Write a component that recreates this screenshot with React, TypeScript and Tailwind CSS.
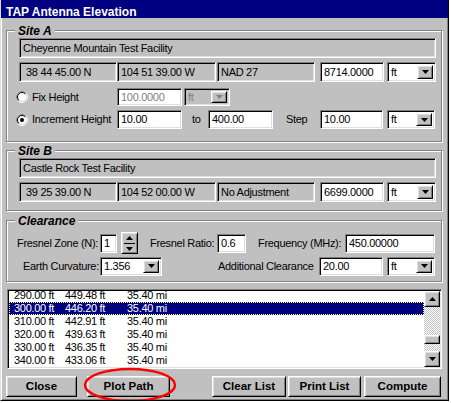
import React from 'react';

const sunken =
  'border border-t-[#808080] border-l-[#808080] border-r-white border-b-white shadow-[inset_1px_1px_0_#000,inset_-1px_-1px_0_#dfdfdf]';
const raised =
  'border border-t-white border-l-white border-r-black border-b-black shadow-[inset_1px_1px_0_#dfdfdf,inset_-1px_-1px_0_#808080]';
const etched = 'border border-[#808080] shadow-[inset_1px_1px_0_#fff,1px_1px_0_#fff]';

const Down = ({ color = '#000' }: { color?: string }) => (
  <svg width="7" height="4" viewBox="0 0 7 4">
    <polygon points="0,0 7,0 3.5,4" fill={color} />
  </svg>
);

const Up = ({ color = '#000' }: { color?: string }) => (
  <svg width="7" height="4" viewBox="0 0 7 4">
    <polygon points="0,4 7,4 3.5,0" fill={color} />
  </svg>
);

const Box = ({
  value,
  className,
  white = false,
  dim = false,
}: {
  value: string;
  className: string;
  white?: boolean;
  dim?: boolean;
}) => (
  <div
    className={`${sunken} ${white ? 'bg-white' : 'bg-[#c0c0c0]'} ${
      dim ? 'text-[#808080]' : 'text-black'
    } flex items-center pl-[3px] overflow-hidden whitespace-nowrap shrink-0 ${className}`}
  >
    {value}
  </div>
);

const Select = ({
  value,
  className,
  disabled = false,
}: {
  value: string;
  className: string;
  disabled?: boolean;
}) => (
  <div
    className={`${sunken} ${disabled ? 'bg-[#c0c0c0] text-[#808080]' : 'bg-white text-black'} flex items-stretch p-[2px] shrink-0 ${className}`}
  >
    <span className="flex-1 flex items-center pl-[1px] overflow-hidden">{value}</span>
    <div className={`${raised} bg-[#c0c0c0] w-[16px] flex items-center justify-center`}>
      <Down color={disabled ? '#808080' : '#000'} />
    </div>
  </div>
);

const Radio = ({ checked = false }: { checked?: boolean }) => (
  <svg width="12" height="12" viewBox="0 0 12 12" className="shrink-0">
    <circle cx="6" cy="6" r="5.5" fill="none" stroke="#fff" />
    <path d="M2.1 9.9 A5.5 5.5 0 0 1 9.9 2.1" fill="none" stroke="#808080" />
    <circle cx="6" cy="6" r="4.5" fill="#fff" stroke="#dfdfdf" />
    <path d="M2.8 9.2 A4.5 4.5 0 0 1 9.2 2.8" fill="none" stroke="#000" />
    {checked && <circle cx="6" cy="6" r="2" fill="#000" />}
  </svg>
);

const Group = ({
  title,
  className,
  children,
}: {
  title: string;
  className: string;
  children: React.ReactNode;
}) => (
  <div className={`${etched} ml-[5px] w-[436px] ${className}`}>
    <div className="-mt-[7px] ml-[8px] h-[14px] leading-[14px] w-fit px-[3px] bg-[#c0c0c0] font-bold italic text-[12px] tracking-normal">
      {title}
    </div>
    {children}
  </div>
);

const Btn = ({ label, className }: { label: string; className: string }) => (
  <div
    className={`${raised} bg-[#c0c0c0] h-[21px] flex items-center justify-center font-bold text-[11.5px] tracking-normal shrink-0 ${className}`}
  >
    {label}
  </div>
);

const rows = [
  ['290.00 ft', '449.48 ft', '35.40 mi'],
  ['300.00 ft', '446.20 ft', '35.40 mi'],
  ['310.00 ft', '442.91 ft', '35.40 mi'],
  ['320.00 ft', '439.63 ft', '35.40 mi'],
  ['330.00 ft', '436.35 ft', '35.40 mi'],
  ['340.00 ft', '433.06 ft', '35.40 mi'],
  ['350.00 ft', '429.78 ft', '35.40 mi'],
];

export default function App() {
  return (
    <div className="w-[451px] h-[403px] bg-white font-['Liberation_Sans',Arial,sans-serif] text-[11px] tracking-[-0.3px] text-black">
      <div className="relative w-[449px] h-[401px] bg-[#c0c0c0] border-l border-l-[#dfdfdf] border-r border-r-black border-b border-b-black shadow-[inset_1px_0_0_#fff,inset_-1px_-1px_0_#808080] flex flex-col overflow-hidden">
        {/* title bar */}
        <div className="h-[18px] bg-[#000080] text-white font-bold text-[12px] tracking-normal leading-[14px] pt-[5px] pl-[5px] shrink-0">
          TAP Antenna Elevation
        </div>

        {/* Site A */}
        <Group title="Site A" className="mt-[12px] pb-[12px]">
          <div className="pl-[12px] mt-0">
            <Box value="Cheyenne Mountain Test Facility" className="w-[417px] h-[20px]" />
            <div className="flex mt-[4px] h-[20px]">
              <Box value="38 44 45.00 N" className="w-[98px] h-[20px] pl-[6px]" />
              <Box value="104 51 39.00 W" className="w-[99px] h-[20px]" />
              <Box value="NAD 27" className="ml-[1px] w-[98px] h-[20px]" />
              <Box value="8714.0000" white className="ml-[5px] w-[64px] h-[20px] pl-[2px]" />
              <Select value="ft" className="ml-[3px] w-[49px] h-[20px]" />
            </div>
            <div className="flex items-center mt-[6px] h-[18px]">
              <div className="-ml-[3px]">
                <Radio />
              </div>
              <span className="ml-[4px] w-[85px]">Fix Height</span>
              <Box value="100.0000" white dim className="w-[65px] h-[18px]" />
              <Select value="ft" disabled className="ml-[2px] w-[46px] h-[18px]" />
            </div>
            <div className="flex items-center mt-[4px] h-[19px]">
              <div className="-ml-[3px]">
                <Radio checked />
              </div>
              <span className="ml-[4px] w-[85px]">Increment Height</span>
              <Box value="10.00" white className="w-[65px] h-[19px]" />
              <span className="ml-[10px] w-[16px]">to</span>
              <Box value="400.00" white className="w-[65px] h-[19px]" />
              <span className="ml-[13px] w-[34px]">Step</span>
              <Box value="10.00" white className="w-[63px] h-[19px]" />
              <Select value="ft" className="ml-[4px] w-[48px] h-[19px]" />
            </div>
          </div>
        </Group>

        {/* Site B */}
        <Group title="Site B" className="mt-[8px] pb-[8px]">
          <div className="pl-[12px]">
            <Box value="Castle Rock Test Facility" className="w-[417px] h-[20px]" />
            <div className="flex mt-[4px] h-[20px]">
              <Box value="39 25 39.00 N" className="w-[98px] h-[20px] pl-[6px]" />
              <Box value="104 52 00.00 W" className="w-[99px] h-[20px]" />
              <Box value="No Adjustment" className="ml-[1px] w-[98px] h-[20px]" />
              <Box value="6699.0000" white className="ml-[5px] w-[64px] h-[20px] pl-[2px]" />
              <Select value="ft" className="ml-[3px] w-[49px] h-[20px]" />
            </div>
          </div>
        </Group>

        {/* Clearance */}
        <Group title="Clearance" className="mt-[9px] pb-[5px]">
          <div className="pl-[10px]">
            <div className="flex items-center mt-[4px] h-[22px]">
              <span className="w-[83px]">Fresnel Zone (N):</span>
              <Box value="1" white className="w-[17px] h-[19px]" />
              <div className={`${raised} ml-[4px] w-[17px] h-[22px] bg-[#c0c0c0] flex flex-col items-center justify-center gap-[3px]`}>
                <Up />
                <div className="w-[11px] h-px bg-black" />
                <Down />
              </div>
              <span className="ml-[12px] w-[67px]">Fresnel Ratio:</span>
              <Box value="0.6" white className="w-[29px] h-[19px]" />
              <span className="ml-[12px] w-[87px]">Frequency (MHz):</span>
              <Box value="450.00000" white className="w-[90px] h-[19px]" />
            </div>
            <div className="flex items-center mt-[2px] h-[20px]">
              <span className="ml-[6px] w-[77px]">Earth Curvature:</span>
              <Select value="1.356" className="w-[62px] h-[19px]" />
              <span className="ml-[56px] w-[101px]">Additional Clearance</span>
              <Box value="20.00" white className="w-[64px] h-[19px]" />
              <Select value="ft" className="ml-[4px] w-[48px] h-[19px]" />
            </div>
          </div>
        </Group>

        {/* results list */}
        <div className={`${sunken} bg-white ml-[6px] mt-[7px] w-[435px] h-[80px] flex p-[1px] shrink-0`}>
          <div className="flex-1 overflow-hidden">
            <div className="-mt-[2px]">
              {rows.map((r, i) => (
                <div
                  key={r[0]}
                  className={`flex h-[13px] items-center pl-[5px] ${
                    i === 1
                      ? 'bg-[#000080] text-white outline-1 outline-dotted outline-[#ffff80] -outline-offset-1'
                      : ''
                  }`}
                >
                  <span className="w-[51px]">{r[0]}</span>
                  <span className="w-[62px]">{r[1]}</span>
                  <span>{r[2]}</span>
                </div>
              ))}
            </div>
          </div>
          <div className="w-[16px] flex flex-col">
            <div className={`${raised} bg-[#c0c0c0] h-[16px] flex items-center justify-center`}>
              <Up />
            </div>
            <div className="flex-1 bg-[repeating-conic-gradient(#c0c0c0_0_25%,#fff_0_50%)] bg-[length:2px_2px]">
              <div className={`${raised} bg-[#c0c0c0] h-[9px] mt-[28px]`} />
            </div>
            <div className={`${raised} bg-[#c0c0c0] h-[16px] flex items-center justify-center`}>
              <Down />
            </div>
          </div>
        </div>

        {/* buttons */}
        <div className="flex mt-[7px]">
          <Btn label="Close" className="ml-[5px] w-[71px]" />
          <Btn label="Plot Path" className="ml-[10px] w-[83px]" />
          <Btn label="Clear List" className="ml-[42px] w-[74px]" />
          <Btn label="Print List" className="ml-[2px] w-[73px]" />
          <Btn label="Compute" className="ml-[3px] w-[77px]" />
        </div>

        {/* red annotation ellipse */}
        <svg className="absolute left-[82px] top-[367px] pointer-events-none" width="94" height="36" viewBox="0 0 94 36">
          <ellipse cx="47" cy="18" rx="45" ry="16" fill="none" stroke="#ff0000" strokeWidth="2.5" />
        </svg>
      </div>
    </div>
  );
}
